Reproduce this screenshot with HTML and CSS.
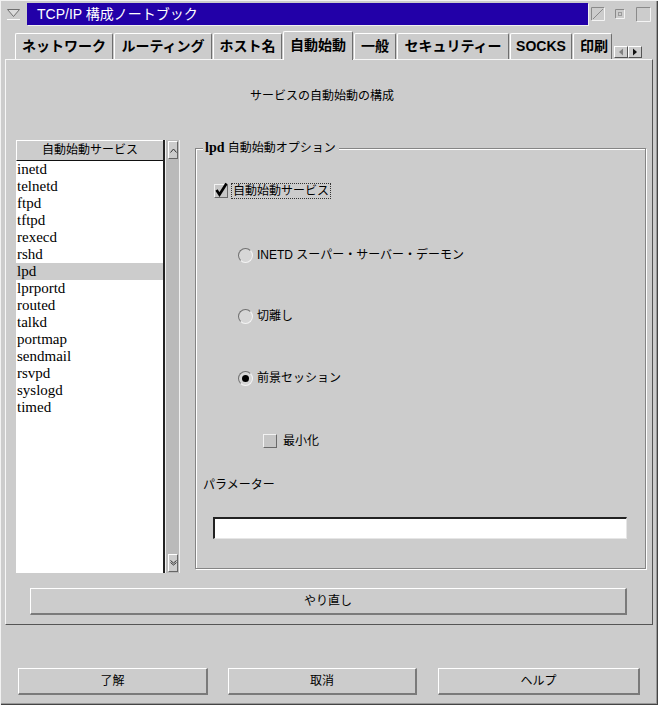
FILE: index.html
```html
<!DOCTYPE html>
<html lang="ja">
<head>
  <meta charset="UTF-8">
  <title>TCP/IP 構成ノートブック</title>
  <link rel="stylesheet" href="styles.css">
</head>
<body>
  <div class="window">
    <div class="titlebar">
      <span class="menu-btn">
        <svg width="15" height="14" viewBox="0 0 15 14"><path d="M1.5 2.5h12l-6 7z" fill="#dcdcdc" stroke="#707070"/><path d="M1 12.5h13" stroke="#fafafa"/></svg>
      </span>
      <div class="title">TCP/IP 構成ノートブック</div>
      <span class="tb-btn tb-min">
        <svg width="14" height="14" viewBox="0 0 14 14"><path d="M0.5 13.5v-13h13" fill="none" stroke="#8a8a8a"/><path d="M0.5 13.5h13v-13" fill="none" stroke="#f4f4f4"/><path d="M2 12L12 2" stroke="#8a8a8a"/></svg>
      </span>
      <span class="tb-btn tb-small">
        <svg width="10" height="10" viewBox="0 0 10 10"><path d="M0.5 9.5v-9h9" fill="none" stroke="#8a8a8a"/><path d="M0.5 9.5h9v-9" fill="none" stroke="#f4f4f4"/><rect x="3.5" y="3.5" width="3" height="3" fill="none" stroke="#9a9a9a"/></svg>
      </span>
      <span class="tb-btn tb-max">
        <svg width="15" height="15" viewBox="0 0 15 15"><path d="M0.5 14.5v-14h14" fill="none" stroke="#8a8a8a"/><path d="M0.5 14.5h14v-14" fill="none" stroke="#f4f4f4"/></svg>
      </span>
    </div>

    <div class="tabs">
      <div class="tab">ネットワーク</div>
      <div class="tab">ルーティング</div>
      <div class="tab">ホスト名</div>
      <div class="tab active">自動始動</div>
      <div class="tab">一般</div>
      <div class="tab">セキュリティー</div>
      <div class="tab">SOCKS</div>
      <div class="tab">印刷</div>
      <div class="tab-scroll">
        <span class="ts-btn"><svg width="6" height="8" viewBox="0 0 6 8"><path d="M5 0.5v7L1 4z" fill="#808080"/></svg></span>
        <span class="ts-btn"><svg width="6" height="8" viewBox="0 0 6 8"><path d="M1 0.5v7L5 4z" fill="#111"/></svg></span>
      </div>
    </div>

    <div class="panel">
      <div class="heading">サービスの自動始動の構成</div>
      <div class="main">
        <div class="listbox">
          <div class="list">
            <div class="list-head">自動始動サービス</div>
            <div class="list-body">
              <div class="list-item">inetd</div>
              <div class="list-item">telnetd</div>
              <div class="list-item">ftpd</div>
              <div class="list-item">tftpd</div>
              <div class="list-item">rexecd</div>
              <div class="list-item">rshd</div>
              <div class="list-item selected">lpd</div>
              <div class="list-item">lprportd</div>
              <div class="list-item">routed</div>
              <div class="list-item">talkd</div>
              <div class="list-item">portmap</div>
              <div class="list-item">sendmail</div>
              <div class="list-item">rsvpd</div>
              <div class="list-item">syslogd</div>
              <div class="list-item">timed</div>
            </div>
          </div>
          <div class="scrollbar">
            <span class="sb-btn"><svg width="7" height="5" viewBox="0 0 7 5"><path d="M0.5 4.5L3.5 1l3 3.5" fill="none" stroke="#333"/></svg></span>
            <span class="sb-btn"><svg width="7" height="6" viewBox="0 0 7 6"><path d="M0.5 0.5L3.5 3l3-2.5M0.5 2.5L3.5 5l3-2.5" fill="none" stroke="#333"/></svg></span>
          </div>
        </div>

        <fieldset class="group">
          <legend><span class="legend-key">lpd</span> 自動始動オプション</legend>

          <div class="opt-row row-auto">
            <span class="check">
              <svg width="14" height="14" viewBox="0 0 14 14"><path d="M2.5 7l3 4.5L12.5 0.5" fill="none" stroke="#000" stroke-width="2.6"/></svg>
            </span>
            <span class="focus-label">自動始動サービス</span>
          </div>

          <div class="opt-row row-inetd">
            <span class="radio"></span>
            <span class="radio-label">INETD スーパー・サーバー・デーモン</span>
          </div>

          <div class="opt-row row-detach">
            <span class="radio"></span>
            <span class="radio-label">切離し</span>
          </div>

          <div class="opt-row row-fore">
            <span class="radio on"></span>
            <span class="radio-label">前景セッション</span>
          </div>

          <div class="opt-row row-min">
            <span class="check"></span>
            <span class="min-label">最小化</span>
          </div>

          <div class="param-label">パラメーター</div>
          <div class="param-field"></div>
        </fieldset>
      </div>
      <button class="btn reset">やり直し</button>
    </div>

    <div class="footer">
      <button class="btn btn-ok">了解</button>
      <button class="btn btn-cancel">取消</button>
      <button class="btn btn-help">ヘルプ</button>
    </div>
  </div>
</body>
</html>
```

FILE: styles.css
```css
* {
  box-sizing: border-box;
}

body {
  margin: 0;
  background: #cccccc;
  color: #000;
  font: 12px/16px "Liberation Sans", "Noto Sans CJK JP", sans-serif;
}

.window {
  width: 658px;
  height: 705px;
  padding-top: 3px;
  box-shadow: inset 1px 1px 0 #f2f2f2, inset -1px -1px 0 #444, inset -2px -2px 0 #999;
}

/* タイトルバー */
.titlebar {
  display: flex;
  align-items: center;
  height: 22px;
  padding: 0 7px 0 6px;
}

.menu-btn {
  display: flex;
  width: 15px;
  height: 14px;
  margin-right: 6px;
}

.title {
  flex: 1;
  height: 22px;
  padding-left: 10px;
  background: #2200a8;
  color: #fff;
  font-size: 14px;
  line-height: 22px;
  box-shadow: 1px 1px 0 #f0f0f0;
}

.tb-btn {
  display: flex;
}

.tb-min {
  margin-left: 3px;
}

.tb-small {
  margin-left: 10px;
}

.tb-max {
  margin-left: 11px;
}

/* タブ */
.tabs {
  display: flex;
  align-items: flex-end;
  height: 28px;
  margin-top: 6px;
  padding-left: 15px;
}

.tab {
  flex: none;
  height: 26px;
  margin-right: 1px;
  border-top: 1px solid #fff;
  border-left: 1px solid #fff;
  border-right: 1px solid #6e6e6e;
  border-radius: 2px 2px 0 0;
  font-size: 14px;
  font-weight: bold;
  line-height: 25px;
  text-align: center;
  white-space: nowrap;
  overflow: hidden;
}

.tab:nth-child(1) { width: 98px; }
.tab:nth-child(2) { width: 98px; }
.tab:nth-child(3) { width: 69px; }
.tab:nth-child(4) { width: 70px; }
.tab:nth-child(5) { width: 42px; }
.tab:nth-child(6) { width: 112px; }
.tab:nth-child(7) { width: 62px; }
.tab:nth-child(8) { width: 39px; text-align: left; padding-left: 6px; }

.tab.active {
  position: relative;
  height: 29px;
  margin-bottom: -1px;
  background: #cccccc;
  line-height: 27px;
}

.tab-scroll {
  display: flex;
  margin: 0 0 1px 1px;
}

.ts-btn {
  display: flex;
  align-items: center;
  justify-content: center;
  width: 14px;
  height: 12px;
  border: 1px solid;
  border-color: #fff #555 #555 #fff;
}

/* パネル */
.panel {
  height: 566px;
  margin: 0 5px;
  border: 1px solid;
  border-color: #f6f6f6 #555 #555 #f6f6f6;
}

.heading {
  padding: 28px 14px 0 0;
  text-align: center;
}

.main {
  display: flex;
  align-items: flex-start;
  margin-top: 36px;
  padding: 0 6px 0 10px;
}

.listbox {
  display: flex;
  width: 164px;
  height: 433px;
}

.list {
  display: flex;
  flex-direction: column;
  width: 149px;
  border-right: 2px solid #222;
}

.list-head {
  height: 21px;
  border-top: 1px solid #fff;
  border-left: 1px solid #fff;
  border-bottom: 1px solid #111;
  line-height: 19px;
  text-align: center;
}

.list-body {
  flex: 1;
  background: #fff;
  font: 15px/17px "Liberation Serif", serif;
}

.list-item {
  height: 17px;
  padding-left: 1px;
}

.list-item.selected {
  background: #cccccc;
}

.scrollbar {
  display: flex;
  flex-direction: column;
  justify-content: space-between;
  width: 15px;
  padding: 1px 1px 1px 2px;
  background: #bababa;
  border-left: 1px solid #f0f0f0;
  border-right: 1px solid #f0f0f0;
}

.sb-btn {
  display: flex;
  align-items: center;
  justify-content: center;
  height: 18px;
  background: #cccccc;
  border: 1px solid;
  border-color: #fff #666 #666 #fff;
}

/* グループ */
.group {
  flex: 1;
  min-width: 0;
  height: 429px;
  margin: 0 0 0 15px;
  padding: 0;
  border: 1px solid #858585;
  box-shadow: inset 1px 1px 0 #fff, 1px 1px 0 #fff;
}

.group legend {
  margin-left: 7px;
  padding: 0 3px 0 2px;
  background: #cccccc;
  line-height: 16px;
}

.legend-key {
  font: bold 14px "Liberation Serif", serif;
}

.opt-row {
  display: flex;
  align-items: center;
  height: 16px;
}

.row-auto {
  margin-top: 27px;
  padding-left: 18px;
}

.row-inetd {
  margin-top: 48px;
  padding-left: 42px;
}

.row-detach {
  margin-top: 45px;
  padding-left: 42px;
}

.row-fore {
  margin-top: 46px;
  padding-left: 42px;
}

.row-min {
  margin-top: 47px;
  padding-left: 67px;
}

.check {
  display: flex;
  width: 14px;
  height: 14px;
  background: #c6c6c6;
  border: 1px solid;
  border-color: #f2f2f2 #6a6a6a #6a6a6a #f2f2f2;
  overflow: visible;
}

.check svg {
  margin: -2px 0 0 -1px;
  overflow: visible;
}

.focus-label {
  margin-left: 3px;
  padding: 0 1px;
  border: 1px dotted #333;
  line-height: 14px;
}

.radio {
  display: flex;
  align-items: center;
  justify-content: center;
  width: 15px;
  height: 15px;
  border-radius: 50%;
  background: #d6d6d6;
  border: 1px solid;
  border-color: #707070 #f4f4f4 #f4f4f4 #707070;
}

.radio.on::after {
  content: "";
  width: 7px;
  height: 7px;
  border-radius: 50%;
  background: #000;
}

.radio-label {
  margin-left: 4px;
}

.min-label {
  margin-left: 6px;
}

.param-label {
  margin-top: 28px;
  padding-left: 7px;
}

.param-field {
  width: 414px;
  height: 22px;
  margin: 24px 0 0 17px;
  background: #fff;
  border-style: solid;
  border-width: 2px 1px 1px 2px;
  border-color: #222 #e6e6e6 #e6e6e6 #222;
}

/* ボタン */
.btn {
  display: block;
  height: 27px;
  padding: 0;
  background: #cccccc;
  color: #000;
  border-style: solid;
  border-width: 1px 2px 2px 1px;
  border-color: #fff #7a7a7a #7a7a7a #fff;
  font: 12px/16px "Liberation Sans", "Noto Sans CJK JP", sans-serif;
}

.reset {
  width: 597px;
  margin: 15px 0 0 24px;
}

.footer {
  display: flex;
  margin-top: 43px;
  padding-left: 18px;
}

.btn-ok {
  width: 190px;
}

.btn-cancel {
  width: 189px;
  margin-left: 20px;
}

.btn-help {
  width: 202px;
  margin-left: 21px;
}
```
